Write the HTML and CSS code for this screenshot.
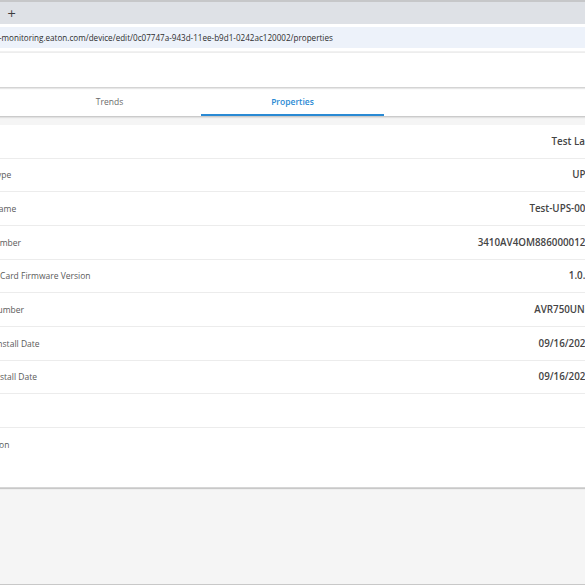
FILE: index.html
```html
<!DOCTYPE html>
<html>
<head>
<meta charset="utf-8">
<link rel="stylesheet" href="styles.css">
</head>
<body>
<div class="chrome-top"></div>
<div class="tabstrip"><span class="newtab">+</span></div>
<div class="toolbar">
  <div class="omnibox"><span class="url">-monitoring.eaton.com/device/edit/0c07747a-943d-11ee-b9d1-0242ac120002/properties</span></div>
</div>
<div class="page">
  <div class="app-header"></div>
  <nav class="tabs">
    <div class="tab">Overview</div>
    <div class="tab">Trends</div>
    <div class="tab active">Properties</div>
  </nav>
  <main class="main">
    <section class="card">
      <div class="row"><span class="label">Site</span><span class="value">Test Lab</span></div>
      <div class="row"><span class="label">Device Type</span><span class="value">UPS</span></div>
      <div class="row"><span class="label">Device Name</span><span class="value">Test-UPS-001</span></div>
      <div class="row"><span class="label">Serial Number</span><span class="value">3410AV4OM8860000123</span></div>
      <div class="row"><span class="label">Network Card Firmware Version</span><span class="value">1.0.2</span></div>
      <div class="row"><span class="label">Model Number</span><span class="value">AVR750UNC</span></div>
      <div class="row"><span class="label">Battery Install Date</span><span class="value">09/16/2024</span></div>
      <div class="row"><span class="label">Device Install Date</span><span class="value">09/16/2024</span></div>
      <div class="row"><span class="label">Notes</span><span class="value"></span></div>
      <div class="row tall"><span class="label">Description</span><span class="value"></span></div>
    </section>
  </main>
</div>
</body>
</html>
```
FILE: styles.css
```css
html, body {
  margin: 0;
  padding: 0;
  width: 585px;
  height: 585px;
  overflow: hidden;
  background: #ffffff;
  font-family: "Open Sans", "Liberation Sans", sans-serif;
}

.chrome-top {
  height: 2px;
  background: #c6c7c9;
}

.tabstrip {
  height: 22px;
  background: #dee1e6;
  display: flex;
  align-items: center;
  padding-left: 7px;
}

.newtab {
  font-family: "DejaVu Sans", sans-serif;
  font-size: 11px;
  color: #3c3c3c;
  line-height: 1;
}

.toolbar {
  background: #ffffff;
  padding: 3px 0 3px 0;
  border-bottom: 2px solid #f1f1f1;
}

.omnibox {
  height: 21px;
  background: #edf2fa;
  display: flex;
  align-items: center;
  white-space: nowrap;
  overflow: hidden;
}

.url {
  font-size: 8.1px;
  color: #2e2e2e;
  margin-left: -1px;
}

.page {
  width: 660px;
  margin-left: -36px;
}

.app-header {
  height: 34px;
  background: #ffffff;
  box-shadow: 0 1px 2px rgba(0,0,0,0.25);
  position: relative;
  z-index: 2;
}

.tabs {
  height: 27px;
  margin-top: 2px;
  margin-left: -129px;
  background: #ffffff;
  display: flex;
  box-shadow: 0 1px 2px rgba(0,0,0,0.25);
  position: relative;
  z-index: 1;
}

.tab {
  flex: 0 0 183px;
  display: flex;
  align-items: center;
  justify-content: center;
  font-size: 8.5px;
  color: #6b6b6b;
  box-sizing: border-box;
  border-bottom: 2px solid transparent;
}

.tab.active {
  color: #2a8ad4;
  font-weight: 600;
  border-bottom-color: #2a8ad4;
}

.main {
  background: #f5f5f5;
  padding-top: 9px;
  height: 469px;
  box-sizing: border-box;
  border-bottom: 1px solid #c8c8c8;
}

.card {
  background: #ffffff;
  box-shadow: 0 1px 1px rgba(0,0,0,0.18);
  border-bottom: 1px solid #d6d6d6;
}

.row {
  height: 33.67px;
  box-sizing: border-box;
  display: flex;
  align-items: center;
  justify-content: space-between;
  padding: 0 33px 0 0;
  border-bottom: 1px solid #ececec;
}

.row.tall {
  height: 59px;
  align-items: flex-start;
  padding-top: 11px;
  border-bottom: none;
}

.label {
  font-size: 8.5px;
  color: #5a5a5a;
}

.value {
  font-size: 9.8px;
  font-weight: 600;
  color: #444444;
}
```
